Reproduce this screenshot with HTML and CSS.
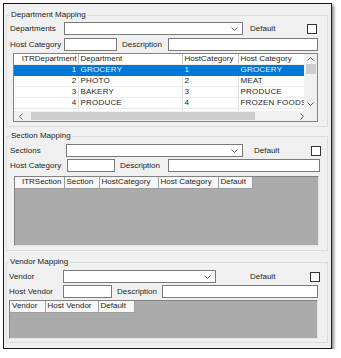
FILE: index.html
```html
<!DOCTYPE html>
<html lang="en">
<head>
    <meta charset="UTF-8">
    <title>Mapping</title>
    <link rel="stylesheet" href="styles.css">
</head>
<body>
    <div class="window">
        <!-- Department Mapping -->
        <fieldset class="group group-dept">
            <legend>Department Mapping</legend>
            <div class="row row-first">
                <span class="lbl" style="width:54px">Departments</span>
                <div class="combo" style="width:179px">
                    <svg class="chev" width="7" height="4" viewBox="0 0 7 4"><polyline points="0.5,0.5 3.5,3.5 6.5,0.5" /></svg>
                </div>
                <span class="lbl-default" style="margin-left:7px">Default</span>
                <span class="check" style="margin-left:32px"></span>
            </div>
            <div class="row">
                <span class="lbl" style="width:54px">Host Category</span>
                <span class="field" style="width:53px"></span>
                <span class="lbl-desc" style="margin-left:5px;width:46px">Description</span>
                <span class="field" style="width:150px"></span>
            </div>
            <div class="grid grid-dept">
                <div class="grid-body">
                    <div class="table-wrap">
                        <table class="data">
                            <colgroup>
                                <col style="width:64px"><col style="width:104px"><col style="width:56px"><col style="width:66px">
                            </colgroup>
                            <thead>
                                <tr><th class="num">ITRDepartment</th><th>Department</th><th>HostCategory</th><th>Host Category</th></tr>
                            </thead>
                            <tbody>
                                <tr class="selected"><td class="num">1</td><td>GROCERY</td><td>1</td><td>GROCERY</td></tr>
                                <tr><td class="num">2</td><td>PHOTO</td><td>2</td><td>MEAT</td></tr>
                                <tr><td class="num">3</td><td>BAKERY</td><td>3</td><td>PRODUCE</td></tr>
                                <tr><td class="num">4</td><td>PRODUCE</td><td>4</td><td>FROZEN FOODS</td></tr>
                                <tr><td class="num">5</td><td>MEAT</td><td>5</td><td>DAIRY</td></tr>
                            </tbody>
                        </table>
                    </div>
                    <div class="vscroll">
                        <svg class="arrow" width="7" height="4" viewBox="0 0 7 4"><polyline points="0.5,3.5 3.5,0.5 6.5,3.5" /></svg>
                        <div class="vthumb"></div>
                        <svg class="arrow arrow-down" width="7" height="4" viewBox="0 0 7 4"><polyline points="0.5,0.5 3.5,3.5 6.5,0.5" /></svg>
                    </div>
                </div>
                <div class="hscroll">
                    <svg class="arrow" width="4" height="7" viewBox="0 0 4 7"><polyline points="3.5,0.5 0.5,3.5 3.5,6.5" /></svg>
                    <div class="hthumb"></div>
                    <svg class="arrow" width="4" height="7" viewBox="0 0 4 7"><polyline points="0.5,0.5 3.5,3.5 0.5,6.5" /></svg>
                    <div class="corner"></div>
                </div>
            </div>
        </fieldset>

        <!-- Section Mapping -->
        <fieldset class="group group-section">
            <legend>Section Mapping</legend>
            <div class="row row-first">
                <span class="lbl" style="width:56px">Sections</span>
                <div class="combo" style="width:177px">
                    <svg class="chev" width="7" height="4" viewBox="0 0 7 4"><polyline points="0.5,0.5 3.5,3.5 6.5,0.5" /></svg>
                </div>
                <span class="lbl-default" style="margin-left:11px">Default</span>
                <span class="check" style="margin-left:32px"></span>
            </div>
            <div class="row">
                <span class="lbl" style="width:57px">Host Category</span>
                <span class="field" style="width:48px"></span>
                <span class="lbl-desc" style="margin-left:5px;width:48px">Description</span>
                <span class="field" style="width:152px"></span>
            </div>
            <div class="grid grid-empty grid-section">
                <table class="head">
                    <tr>
                        <th style="width:49px" class="num">ITRSection</th>
                        <th style="width:35px">Section</th>
                        <th style="width:59px">HostCategory</th>
                        <th style="width:60px">Host Category</th>
                        <th style="width:34px">Default</th>
                    </tr>
                </table>
            </div>
        </fieldset>

        <!-- Vendor Mapping -->
        <fieldset class="group group-vendor">
            <legend>Vendor Mapping</legend>
            <div class="row row-first">
                <span class="lbl" style="width:54px">Vendor</span>
                <div class="combo" style="width:153px">
                    <svg class="chev" width="7" height="4" viewBox="0 0 7 4"><polyline points="0.5,0.5 3.5,3.5 6.5,0.5" /></svg>
                </div>
                <span class="lbl-default" style="margin-left:34px">Default</span>
                <span class="check" style="margin-left:35px"></span>
            </div>
            <div class="row">
                <span class="lbl" style="width:54px">Host Vendor</span>
                <span class="field" style="width:49px"></span>
                <span class="lbl-desc" style="margin-left:5px;width:45px">Description</span>
                <span class="field" style="width:156px"></span>
            </div>
            <div class="grid grid-empty grid-vendor">
                <table class="head">
                    <tr>
                        <th style="width:35px">Vendor</th>
                        <th style="width:53px">Host Vendor</th>
                        <th style="width:36px">Default</th>
                    </tr>
                </table>
            </div>
        </fieldset>
    </div>
</body>
</html>
```

FILE: styles.css
```css
* {
    margin: 0;
    padding: 0;
    box-sizing: border-box;
}

body {
    font-family: 'Liberation Sans', Arial, sans-serif;
    font-size: 8px;
    line-height: 10px;
    color: #1e1e1e;
    background: #ffffff;
}

/* Dialog frame */
.window {
    margin: 3px 0 0 3px;
    width: 329px;
    height: 346px;
    background: #f0f0f0;
    border: 1px solid #1a1a1a;
    box-shadow: 2px 2px 3px rgba(0, 0, 0, 0.45);
    padding: 0 3px 0 2px;
}

/* Group boxes */
.group {
    border: 1px solid #dcdcdc;
    padding: 0 3px 3px 3px;
    min-width: 0;
}

.group legend {
    margin-left: 0;
    padding: 0 1px;
    line-height: 10px;
    color: #222;
}

.group-dept {
    margin-top: 6px;
    padding-bottom: 4px;
}

.group-section {
    margin-top: 4px;
    padding-bottom: 4px;
}

.group-vendor {
    margin-top: 6px;
    padding-left: 2px;
}

.row {
    display: flex;
    align-items: center;
    height: 13px;
    margin-top: 3px;
}

.group-dept .row-first { margin-top: 2px; }
.group-section .row-first { margin-top: 3px; }
.group-vendor .row-first { margin-top: 3px; }
.group-section .row:not(.row-first),
.group-vendor .row:not(.row-first) { margin-top: 2px; }

.lbl {
    white-space: nowrap;
    overflow: hidden;
}

.combo {
    height: 13px;
    background: #ffffff;
    border: 1px solid #7a7a7a;
    display: flex;
    align-items: center;
    justify-content: flex-end;
    padding-right: 4px;
}

.chev polyline,
.arrow polyline {
    fill: none;
    stroke: #606060;
    stroke-width: 1;
}

.check {
    width: 10px;
    height: 10px;
    background: #ffffff;
    border: 1px solid #333333;
}

.field {
    height: 13px;
    background: #ffffff;
    border: 1px solid #7a7a7a;
}

.lbl-desc {
    white-space: nowrap;
}

/* Grids */
.grid {
    margin-top: 2px;
    border: 1px solid #828282;
    border-right-color: #e4e4e4;
    border-bottom-color: #e4e4e4;
}

.grid-dept {
    margin-left: 3px;
    width: 305px;
    height: 69px;
    display: flex;
    flex-direction: column;
    border-color: #828282;
}

.grid-body {
    flex: 1;
    display: flex;
    overflow: hidden;
    background: #ffffff;
}

.table-wrap {
    width: 290px;
    overflow: hidden;
}

table {
    border-collapse: collapse;
    table-layout: fixed;
}

.data {
    width: 290px;
}

.data th,
.data td {
    height: 10.7px;
    padding: 0 2px;
    font-weight: normal;
    text-align: left;
    white-space: nowrap;
    overflow: hidden;
    border-right: 1px solid #e2e2e2;
    border-bottom: 1px solid #ececec;
    letter-spacing: 0.2px;
}

.data th {
    height: 10px;
    border-right-color: #c8c8c8;
    letter-spacing: 0;
}

.data .num {
    text-align: right;
    padding-right: 1px;
}

.data tr.selected td {
    background: #0078d7;
    color: #eaf3ff;
    border-color: #0078d7;
}

.vscroll {
    width: 13px;
    background: #f0f0f0;
    display: flex;
    flex-direction: column;
    align-items: center;
    padding: 3px 0;
}

.vthumb {
    width: 10px;
    height: 10px;
    margin-top: 3px;
    background: #cdcdcd;
}

.arrow-down {
    margin-top: auto;
    margin-bottom: 2px;
}

.hscroll {
    height: 10px;
    background: #f0f0f0;
    display: flex;
    align-items: center;
    padding-left: 5px;
}

.hthumb {
    width: 225px;
    height: 8px;
    margin-left: 8px;
    background: #cdcdcd;
}

.hscroll .arrow:nth-of-type(2) {
    margin-left: 45px;
}

.corner {
    margin-left: auto;
    width: 13px;
    height: 10px;
    background: #f0f0f0;
}

.grid-empty {
    background: #ababab;
}

.grid-section {
    margin-left: 4px;
    width: 305px;
    height: 70px;
    margin-top: 4px;
}

.grid-vendor {
    margin-left: 0;
    width: 309px;
    height: 39px;
}

.head th {
    height: 11px;
    padding: 0 2px;
    font-weight: normal;
    text-align: left;
    white-space: nowrap;
    overflow: hidden;
    background: #f7f7f7;
    border-right: 1px solid #a0a0a0;
    border-bottom: 1px solid #a0a0a0;
}

.head th.num {
    text-align: right;
}
```
